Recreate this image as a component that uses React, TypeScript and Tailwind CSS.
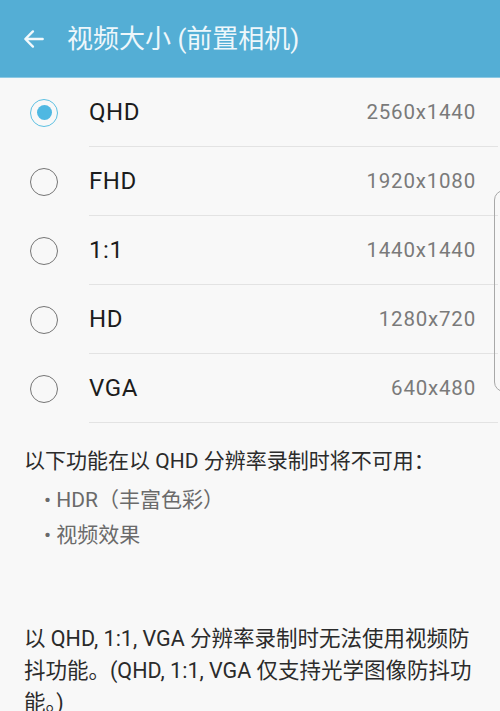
import React from "react";

const SIZES = [
  { key: "qhd", label: "QHD", res: "2560x1440" },
  { key: "fhd", label: "FHD", res: "1920x1080" },
  { key: "sq", label: "1:1", res: "1440x1440" },
  { key: "hd", label: "HD", res: "1280x720" },
  { key: "vga", label: "VGA", res: "640x480" },
];

const FONT = {
  fontFamily: 'Roboto, "Noto Sans CJK SC", sans-serif',
};

function Radio({ checked }: { checked: boolean }) {
  return checked ? (
    <div className="w-[28px] h-[28px] rounded-full border-[1.5px] border-[#5cc0e2] flex items-center justify-center">
      <div className="w-[15px] h-[15px] rounded-full bg-[#4fb8e2]" />
    </div>
  ) : (
    <div className="w-[28px] h-[28px] rounded-full border-[1.5px] border-[#757575]" />
  );
}

export default function App() {
  const [active, setActive] = React.useState("qhd");

  return (
    <div
      className="relative w-[500px] h-[711px] overflow-hidden bg-[#f8f8f8]"
      style={FONT}
    >
      {/* header */}
      <div className="h-[78px] bg-[#54aed5] border-b border-b-[#8cc9e4] flex items-center pl-[21px]">
        <svg width="26" height="26" viewBox="0 0 24 24" fill="none">
          <path
            d="M20 12H5M11 5l-7 7 7 7"
            stroke="#f3f9fc"
            strokeWidth="2.2"
            strokeLinecap="round"
            strokeLinejoin="round"
          />
        </svg>
        <span className="ml-[20px] text-[26px] text-[#eef7fb] leading-none">
          视频大小 (前置相机)
        </span>
      </div>

      {/* list */}
      <div className="flex flex-col">
        {SIZES.map((s) => (
          <button
            key={s.key}
            onClick={() => setActive(s.key)}
            className="flex items-center h-[69px] w-full text-left"
          >
            <div className="w-[89px] flex pl-[30px]">
              <Radio checked={active === s.key} />
            </div>
            <div className="flex-1 h-full flex items-center justify-between pr-[22px] mr-[2px] border-b border-b-[#e3e3e3]">
              <span className="text-[24px] tracking-[0.6px] text-[#1c1c1c]">
                {s.label}
              </span>
              <span className="text-[20.5px] tracking-[0.8px] text-[#7a7a7a]">
                {s.res}
              </span>
            </div>
          </button>
        ))}
      </div>

      {/* notes */}
      <div className="px-[24px] pt-[24px]">
        <p className="text-[21px] text-[#2b2b2b] leading-[28px]">
          以下功能在以 QHD 分辨率录制时将不可用：
        </p>
        <ul className="mt-[8px] pl-[20px] text-[21px] text-[#6a6a6a] leading-[35px]">
          <li>• HDR（丰富色彩）</li>
          <li>• 视频效果</li>
        </ul>
        <p className="mt-[70px] text-[21.5px] text-[#2b2b2b] leading-[32px]">
          以 QHD, 1:1, VGA 分辨率录制时无法使用视频防抖功能。(QHD, 1:1, VGA
          仅支持光学图像防抖功能。)
        </p>
      </div>

      {/* scroll handle */}
      <div className="absolute right-[-14px] top-[190px] w-[20px] h-[202px] rounded-[10px] border border-[#a8a8a8]" />
    </div>
  );
}
